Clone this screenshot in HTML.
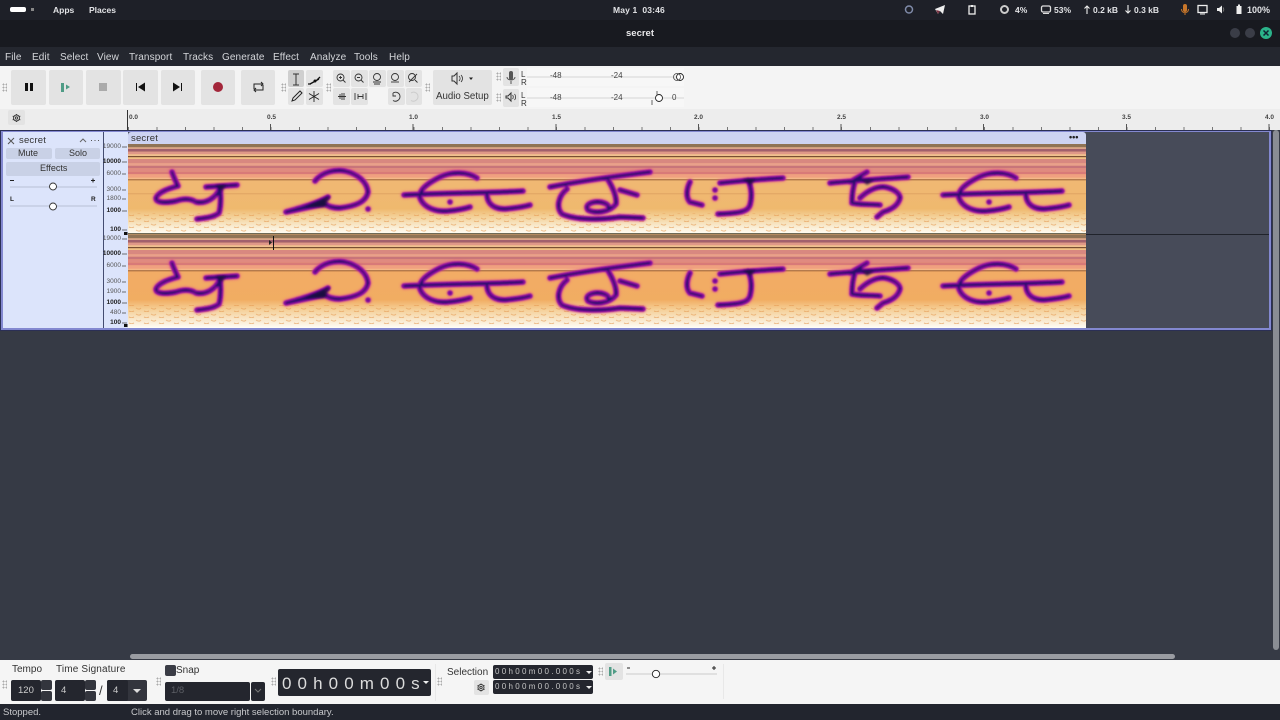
<!DOCTYPE html>
<html><head><meta charset="utf-8"><style>
*{box-sizing:border-box;margin:0;padding:0}
html,body{width:1280px;height:720px;overflow:hidden;background:#363a45;font-family:"Liberation Sans",sans-serif}
.a{position:absolute}
.t{position:absolute;white-space:nowrap;line-height:1}
.m{top:53px;font-size:10px;color:#d4d6da;letter-spacing:.1px}
.b{position:absolute;background:#e3e3e3;border-radius:2px}
.tt{top:5px;font-size:8.5px;color:#e2e3e6;font-weight:bold}
.g{position:absolute;width:5px;background-image:radial-gradient(circle,#aaa 0.8px,transparent 1px);background-size:3px 3px}
.r{position:absolute;font-size:6.5px;color:#555;right:1159px;line-height:1;white-space:nowrap}
.rb{font-weight:bold;color:#222}
.rl{position:absolute;top:115px;font-size:6.5px;font-weight:bold;color:#444;line-height:1}
.d{position:absolute;background:#24262e;border-radius:2px}
svg{position:absolute;overflow:visible}
</style></head><body>

<div class="a" style="left:0;top:0;width:1280px;height:20px;background:#1e2028"></div>
<div class="a" style="left:0;top:20px;width:1280px;height:27px;background:#181a20"></div>
<div class="a" style="left:0;top:47px;width:1280px;height:19px;background:#24272f"></div>
<div class="a" style="left:0;top:66px;width:1280px;height:43px;background:#f4f4f4"></div>
<div class="a" style="left:0;top:109px;width:1280px;height:21px;background:#ededed"></div>

<div class="a" style="left:10px;top:7px;width:16px;height:5px;background:#fff;border-radius:2px"></div>
<div class="a" style="left:31px;top:8px;width:3px;height:3px;background:#888"></div>
<div class="t tt" style="left:53px;top:6px">Apps</div>
<div class="t tt" style="left:89px;top:6px">Places</div>
<div class="t tt" style="left:613px;top:6px;letter-spacing:.15px">May 1&nbsp; 03:46</div>
<div class="t" style="left:626px;top:29px;font-size:9.500px;font-weight:bold;color:#e8e8ea">secret</div>

<svg style="left:0;top:0" width="1280" height="47" viewBox="0 0 1280 47">
<circle cx="909" cy="9.500" r="3.500" fill="none" stroke="#7f8aa8" stroke-width="1.500"/>
<path d="M935 9L945 5L943 14L940 11L938 14Z" fill="#eee"/><path d="M936 10L940 11L938 14Z" fill="#7a3040"/>
<rect x="969" y="6" width="6" height="8" fill="none" stroke="#eee" stroke-width="1.300"/><rect x="971" y="5" width="2" height="2" fill="#eee"/>
<circle cx="1004.500" cy="9.500" r="3.500" fill="none" stroke="#ccc" stroke-width="2"/>
<rect x="1041.500" y="6" width="9" height="6" rx="1.500" fill="none" stroke="#ddd" stroke-width="1.300"/><path d="M1043 13.500h6" stroke="#ddd"/>
<path d="M1087 14V6M1084.500 8.500L1087 6L1089.500 8.500" fill="none" stroke="#eee" stroke-width="1.100"/>
<path d="M1128 5V13M1125.500 10.500L1128 13L1130.500 10.500" fill="none" stroke="#eee" stroke-width="1.100"/>
<rect x="1183" y="4" width="4" height="8" rx="2" fill="#c8762a"/><path d="M1181.500 9c0 5 7 5 7 0M1185 13v2" stroke="#c8762a" fill="none"/>
<rect x="1198" y="5.500" width="9" height="7" fill="none" stroke="#eee" stroke-width="1.300"/><path d="M1200 14h5" stroke="#eee"/>
<path d="M1217 8h2l3-2.500v8l-3-2.500h-2z" fill="#eee"/><path d="M1223 7.500c1 1 1 3 0 4" stroke="#777" fill="none"/>
<rect x="1236.500" y="6" width="5" height="8" fill="#eee"/><rect x="1238" y="4.500" width="2" height="2" fill="#eee"/>
<circle cx="1235" cy="33" r="5" fill="#3a3d47"/><circle cx="1250" cy="33" r="5" fill="#3a3d47"/><circle cx="1266" cy="33" r="6" fill="#2bb38a"/>
<path d="M1263.500 30.500l5 5M1268.500 30.500l-5 5" stroke="#123" stroke-width="1.500"/>
</svg>
<div class="t tt" style="left:1015px;top:6px">4%</div>
<div class="t tt" style="left:1054px;top:6px">53%</div>
<div class="t tt" style="left:1093px;top:6px">0.2 kB</div>
<div class="t tt" style="left:1134px;top:6px">0.3 kB</div>
<div class="t tt" style="left:1247px;top:6px;font-size:9px">100%</div>

<div class="t m" style="left:5px">File</div>
<div class="t m" style="left:32px">Edit</div>
<div class="t m" style="left:60px">Select</div>
<div class="t m" style="left:97px">View</div>
<div class="t m" style="left:129px">Transport</div>
<div class="t m" style="left:183px">Tracks</div>
<div class="t m" style="left:222px">Generate</div>
<div class="t m" style="left:273px">Effect</div>
<div class="t m" style="left:310px">Analyze</div>
<div class="t m" style="left:354px">Tools</div>
<div class="t m" style="left:389px">Help</div>

<div class="b" style="left:11px;top:70px;width:35px;height:35px"></div>
<div class="b" style="left:49px;top:70px;width:34px;height:35px"></div>
<div class="b" style="left:86px;top:70px;width:35px;height:35px"></div>
<div class="b" style="left:123px;top:70px;width:35px;height:35px"></div>
<div class="b" style="left:161px;top:70px;width:34px;height:35px"></div>
<div class="b" style="left:201px;top:70px;width:34px;height:35px"></div>
<div class="b" style="left:241px;top:70px;width:34px;height:35px"></div>
<div class="b" style="left:288px;top:70px;width:16px;height:17px;background:#cfcfcf"></div>
<div class="b" style="left:306px;top:70px;width:17px;height:17px"></div>
<div class="b" style="left:288px;top:88px;width:16px;height:17px"></div>
<div class="b" style="left:306px;top:88px;width:17px;height:17px"></div>
<div class="b" style="left:333px;top:70px;width:17px;height:17px"></div>
<div class="b" style="left:351px;top:70px;width:17px;height:17px"></div>
<div class="b" style="left:369px;top:70px;width:17px;height:17px"></div>
<div class="b" style="left:387px;top:70px;width:17px;height:17px"></div>
<div class="b" style="left:405px;top:70px;width:17px;height:17px"></div>
<div class="b" style="left:333px;top:88px;width:17px;height:17px"></div>
<div class="b" style="left:351px;top:88px;width:17px;height:17px"></div>
<div class="b" style="left:388px;top:88px;width:17px;height:17px"></div>
<div class="b" style="left:406px;top:88px;width:16px;height:17px"></div>
<div class="b" style="left:433px;top:70px;width:59px;height:35px"></div>
<div class="b" style="left:503px;top:68px;width:16px;height:18px"></div>
<div class="b" style="left:503px;top:89px;width:16px;height:18px"></div>
<div class="b" style="left:8px;top:110px;width:17px;height:15px"></div>

<div class="g" style="left:2px;top:83px;height:9px"></div>
<div class="g" style="left:281px;top:83px;height:9px"></div>
<div class="g" style="left:326px;top:83px;height:9px"></div>
<div class="g" style="left:425px;top:83px;height:9px"></div>
<div class="g" style="left:496px;top:72px;height:9px"></div>
<div class="g" style="left:496px;top:93px;height:9px"></div>

<svg style="left:0;top:60px" width="700" height="60" viewBox="0 60 700 60">
<rect x="25" y="83" width="3" height="8" fill="#111"/><rect x="30" y="83" width="3" height="8" fill="#111"/>
<rect x="61" y="83" width="3" height="9" fill="#4f9c86"/><path d="M66 84.500l4 2.500-4 2.500z" fill="#4f9c86"/>
<rect x="99" y="83" width="8" height="8" fill="#aaa"/>
<rect x="136" y="83" width="1" height="8" fill="#111"/><path d="M145 82.500v9l-7-4.500z" fill="#111"/>
<path d="M173 82.500v9l7-4.500z" fill="#111"/><rect x="181" y="83" width="1" height="8" fill="#111"/>
<circle cx="218" cy="87" r="5" fill="#a3263a"/>
<path d="M254 89v-5h8M261 82l2 2-2 2M263 85v5h-8M256 92l-2-2 2-2" fill="none" stroke="#222" stroke-width="1"/>
<path d="M293 74h6M293 85h6M296 74v11" stroke="#333" fill="none"/>
<path d="M310 84l9-5M308 84h3M317 80l3-3" stroke="#111" stroke-width="1.300" fill="none"/><circle cx="315" cy="81" r="1.500" fill="#111"/>
<path d="M292 101l1-3 7-7 2 2-7 7z" fill="none" stroke="#222"/>
<path d="M314 91v11M309 93.500l10 6M319 93.500l-10 6" stroke="#222" stroke-width=".9"/>
<g fill="none" stroke="#333" stroke-width=".9">
<circle cx="340.500" cy="77.500" r="3.500"/><path d="M343 80l2.500 2.500M339 77.500h3M340.500 76v3"/>
<circle cx="358.500" cy="77.500" r="3.500"/><path d="M361 80l2.500 2.500M357 77.500h3"/>
<circle cx="377" cy="77" r="3.500"/><path d="M373 82h8M374 84h6"/>
<circle cx="395" cy="77" r="3.500"/><path d="M391 82h8"/>
<circle cx="412" cy="77" r="3.500"/><path d="M415 80l2.500 2.500M409 82l8-8"/>
<path d="M338 96.500h8M340 94v5M344 93v7M342 93v7"/>
<path d="M355 93v7M366 93v7M358 96.500h5M358 94v5M363 94v5"/>
<path d="M393 93c3-2 7 0 7 3.500s-4 6-7 4M393 93v3h3"/>
</g>
<path d="M411 93c3-2 7 0 7 3.500s-4 6-7 4" fill="none" stroke="#ccc"/>
<path d="M452 76h2l3-3v11l-3-3h-2z" fill="none" stroke="#333"/><path d="M459 76c1.500 1.500 1.500 3.500 0 5M461 75c2 2 2 5 0 7" fill="none" stroke="#333" stroke-width=".8"/>
<path d="M469 77.500h4l-2 2.500z" fill="#222"/>
<rect x="509" y="71" width="4" height="9" rx="2" fill="#555"/><path d="M507 77c0 4 8 4 8 0M511 81v3" fill="none" stroke="#555"/>
<path d="M506 96h2l3-3v8l-3-3h-2z" fill="none" stroke="#333"/><path d="M512.500 95c1 1 1 3 0 4M514.500 94c1.500 1.500 1.500 4.500 0 6" fill="none" stroke="#333" stroke-width=".8"/>
<rect x="527" y="68" width="157" height="18" fill="#f7f7f7"/><rect x="527" y="88" width="157" height="19" fill="#f7f7f7"/>
<path d="M527 77H684M527 98H684" stroke="#d5d5d5"/>
<circle cx="680" cy="77" r="3.500" fill="#fff" stroke="#222" stroke-width=".9"/><circle cx="677" cy="77" r="3.500" fill="none" stroke="#444" stroke-width=".8"/>
<circle cx="659" cy="98" r="3.500" fill="#fff" stroke="#222" stroke-width=".9"/><path d="M652 100v5M657 91v4" stroke="#666"/>
<g fill="none" stroke="#333" stroke-width=".9"><circle cx="16.500" cy="118" r="3"/><circle cx="16.500" cy="118" r="1.200"/><path d="M16.500 114v1M16.500 121v1M12.700 116l1 .6M19.300 119.400l1 .6M12.700 120l1-.6M19.300 116.600l1-.6"/></g>
</svg>

<div class="t" style="left:436px;top:91.500px;font-size:9.700px;color:#333">Audio Setup</div>
<div class="t" style="left:521px;top:71px;font-size:8px;color:#333;line-height:8px;white-space:normal;width:8px">L<br>R</div>
<div class="t" style="left:521px;top:92px;font-size:8px;color:#333;line-height:8px;white-space:normal;width:8px">L<br>R</div>
<div class="t" style="left:550px;top:72px;font-size:8px;color:#444">-48</div>
<div class="t" style="left:611px;top:72px;font-size:8px;color:#444">-24</div>
<div class="t" style="left:550px;top:94px;font-size:8px;color:#444">-48</div>
<div class="t" style="left:611px;top:94px;font-size:8px;color:#444">-24</div>
<div class="t" style="left:672px;top:94px;font-size:8px;color:#444">0</div>

<div class="rl" style="left:129px">0.0</div><div class="rl" style="left:267px">0.5</div><div class="rl" style="left:409px">1.0</div><div class="rl" style="left:552px">1.5</div><div class="rl" style="left:694px">2.0</div><div class="rl" style="left:837px">2.5</div><div class="rl" style="left:980px">3.0</div><div class="rl" style="left:1122px">3.5</div><div class="rl" style="left:1265px">4.0</div>
<div class="a" style="left:127px;top:110px;width:1px;height:20px;background:#333"></div>
<div class="a" style="left:128px;top:127px;width:1143px;height:3px;background:repeating-linear-gradient(90deg,#777 0,#777 1px,transparent 1px,transparent 28.53px)"></div>
<div class="a" style="left:270px;top:124px;width:1000px;height:6px;background:repeating-linear-gradient(90deg,#555 0,#555 1px,transparent 1px,transparent 142.65px)"></div>

<div class="a" style="left:0;top:130px;width:1272px;height:201px;background:#474b59;border:3px solid #8388d0;border-top-width:2px;outline:1px solid #2b2f55;outline-offset:-1px"></div>
<div class="a" style="left:3px;top:132px;width:100px;height:196px;background:#dce4fb"></div>
<div class="a" style="left:103px;top:132px;width:1px;height:196px;background:#444c70"></div>
<div class="a" style="left:104px;top:132px;width:24px;height:196px;background:#dce4fb"></div>
<div class="a" style="left:128px;top:132px;width:958px;height:12px;background:#cdd3f2;border-radius:3px 3px 0 0"></div>
<div class="a" style="left:1086px;top:234px;width:183px;height:1px;background:#20232b"></div>
<div class="a" style="left:1273px;top:130px;width:6px;height:520px;background:#8a8d94;border-radius:3px"></div>

<div class="t" style="left:131px;top:134px;font-size:9.500px;color:#333;letter-spacing:.2px">secret</div>
<div class="t" style="left:1069px;top:133px;font-size:9px;font-weight:bold;color:#222">•••</div>
<div class="t" style="left:19px;top:136px;font-size:9.500px;color:#333;letter-spacing:.2px">secret</div>
<div class="b" style="left:6px;top:148px;width:46px;height:11px;background:#c9d1e6"></div>
<div class="b" style="left:55px;top:148px;width:45px;height:11px;background:#c9d1e6"></div>
<div class="b" style="left:6px;top:162px;width:94px;height:14px;background:#c9d1e6"></div>
<div class="t" style="left:18px;top:149px;font-size:9px;color:#333">Mute</div>
<div class="t" style="left:69px;top:149px;font-size:9px;color:#333">Solo</div>
<div class="t" style="left:40px;top:164px;font-size:9px;color:#333">Effects</div>
<div class="t" style="left:10px;top:197px;font-size:6.500px;font-weight:bold;color:#222">L</div>
<div class="t" style="left:91px;top:197px;font-size:6.500px;font-weight:bold;color:#222">R</div>

<svg style="left:0;top:130px" width="128" height="200" viewBox="0 130 128 200">
<path d="M8 138l6 6M14 138l-6 6" stroke="#555" fill="none"/>
<path d="M80 142l3-3 3 3" stroke="#666" fill="none"/><path d="M91 140.500h1M94.500 140.500h1M98 140.500h1" stroke="#555"/>
<path d="M10 180.500h4M91 180.500h4M93 178.500v4" stroke="#222"/>
<path d="M10 187H97M10 206H97" stroke="#b9c0d6"/>
<circle cx="53" cy="186.500" r="3.500" fill="#fff" stroke="#333" stroke-width=".9"/><circle cx="53" cy="206.500" r="3.500" fill="#fff" stroke="#333" stroke-width=".9"/>
<rect x="124" y="232" width="3.500" height="3" fill="#111"/><rect x="124" y="324" width="3.500" height="3" fill="#111"/>
<path d="M122 147h5M122 162h5M122 174h4M122 190h4M122 199h4M122 211h5M122 230h5M122 239h5M122 254h5M122 266h4M122 282h4M122 292h4M122 303h5M122 313h4M122 323h5" stroke="#444" stroke-width=".8"/>
</svg>
<div class="r" style="top:144px">19000</div><div class="r rb" style="top:159px">10000</div><div class="r" style="top:171px">6000</div><div class="r" style="top:187px">3000</div><div class="r" style="top:196px">1800</div><div class="r rb" style="top:208px">1000</div><div class="r rb" style="top:227px">100</div>
<div class="r" style="top:236px">19000</div><div class="r rb" style="top:251px">10000</div><div class="r" style="top:263px">6000</div><div class="r" style="top:279px">3000</div><div class="r" style="top:289px">1900</div><div class="r rb" style="top:300px">1000</div><div class="r" style="top:310px">480</div><div class="r rb" style="top:320px">100</div>

<svg style="left:128px;top:144px;overflow:hidden" width="958" height="184" viewBox="128 144 958 184">
<defs>
<linearGradient id="o1" x1="0" y1="0" x2="0" y2="1"><stop offset="0" stop-color="#f2b67a"/><stop offset=".72" stop-color="#efb96e"/><stop offset=".82" stop-color="#f4d49e"/><stop offset=".92" stop-color="#f9edd3"/><stop offset="1" stop-color="#fffdf5"/></linearGradient>
<linearGradient id="o2" x1="0" y1="0" x2="0" y2="1"><stop offset="0" stop-color="#f4a96a"/><stop offset=".7" stop-color="#f1ad62"/><stop offset=".8" stop-color="#f5cf96"/><stop offset=".92" stop-color="#f9ead0"/><stop offset="1" stop-color="#fffdf5"/></linearGradient>
<pattern id="sp" width="15" height="6" patternUnits="userSpaceOnUse"><path d="M1 2c2 1.500 4 1.500 5 0M9 5c2 1 3 1 5 0" stroke="#e59a52" stroke-width="1" fill="none" opacity=".6"/></pattern>
<filter id="sf" x="0" y="-5%" width="100%" height="110%"><feGaussianBlur stdDeviation="0 .35"/></filter>
<filter id="gl" x="-5%" y="-30%" width="110%" height="160%">
<feGaussianBlur in="SourceAlpha" stdDeviation="1.600" result="b1"/><feFlood flood-color="#e2478a"/><feComposite in2="b1" operator="in" result="halo"/>
<feGaussianBlur in="SourceGraphic" stdDeviation=".9" result="body"/>
<feMorphology in="SourceAlpha" operator="erode" radius="1.700"/><feGaussianBlur stdDeviation=".7" result="c1"/><feFlood flood-color="#2a0c6e"/><feComposite in2="c1" operator="in" result="core"/>
<feMerge><feMergeNode in="halo"/><feMergeNode in="body"/><feMergeNode in="core"/></feMerge>
</filter>
<filter id="bl" x="-10%" y="-30%" width="120%" height="160%"><feGaussianBlur stdDeviation="1.300"/></filter>
</defs>

<rect x="128" y="144" width="958" height="90" fill="url(#o1)"/>
<rect x="128" y="213" width="958" height="19" fill="url(#sp)"/>
<g filter="url(#sf)">
<rect x="128" y="144" width="958" height="3.300" fill="#8f7355"/><rect x="128" y="147.300" width="958" height="2" fill="#d9a58a"/><rect x="128" y="149" width="958" height="2.700" fill="#a2616c"/><rect x="128" y="151.700" width="958" height="2.600" fill="#e09888"/><rect x="128" y="154.300" width="958" height="1.700" fill="#f0c090"/><rect x="128" y="156" width="958" height="1.300" fill="#7a5030"/><rect x="128" y="157.300" width="958" height="1.700" fill="#f2c285"/><rect x="128" y="159" width="958" height="4.300" fill="#d88880"/><rect x="128" y="163.300" width="958" height="2.400" fill="#e9a08c"/><rect x="128" y="165.700" width="958" height="2.600" fill="#c8747a"/><rect x="128" y="168.300" width="958" height="3.400" fill="#e08a80"/><rect x="128" y="171.700" width="958" height="2.600" fill="#d87a78"/><rect x="128" y="174.300" width="958" height="3.400" fill="#f0a080"/><rect x="128" y="177.700" width="958" height="1.600" fill="#f4b888"/><rect x="128" y="179.300" width="958" height="1" fill="#9a6238"/>
<rect x="128" y="193.500" width="958" height=".7" fill="#d99a5c"/>
</g>
<path filter="url(#gl)" fill="none" stroke="#8a16a0" stroke-width="5.500" stroke-linecap="round" stroke-linejoin="round" d="M172 172C174 178 176 182 178 186C170 188 158 192 156 198C156 203 166 203 176 201C182 199 190 198 196 202C206 204 216 198 220 188M206 187L237 185M220 187C221 198 221 206 219 213C214 217 206 218 197 219M315 181C322 172 335 169 345 171C358 174 367 182 368 192C366 202 356 206 340 208C332 208 327 206 324 203M328 197C318 203 300 208 286 212L324 204M368 209h.1M477 178C468 172 452 171 440 177C428 183 418 190 420 198C424 208 436 212 448 211C458 210 464 209 470 207M404 195C440 193 490 193 523 191M450 202h.1M487 196C488 204 494 209 505 209C515 208 523 207 530 205M550 187C570 183 600 178 650 172M567 189C558 196 556 208 562 214C575 220 600 220 620 217L643 218M620 190L637 195M607 178C612 186 617 196 616 204C610 212 596 214 588 210C584 205 592 201 600 202C606 203 610 205 608 210M690 182C686 190 686 198 690 202L702 205M715 190h.1M715 198h.1M720 183C740 181 765 179 783 178M748 180C752 188 752 198 750 205C748 211 743 213 718 214M830 183C850 181 880 179 908 177M867 172L850 182M855 182C852 190 852 198 852 203C862 205 872 204 880 205M860 198C868 190 878 186 885 187C895 189 900 194 900 198C898 206 890 210 883 212L877 217M1016 178C1007 172 991 171 979 177C967 183 957 190 959 198C963 208 975 212 987 211C997 210 1003 209 1009 207M943 195C979 193 1029 193 1062 191M989 202h.1M1026 196C1027 204 1033 209 1044 209C1054 208 1062 207 1069 205"/>
<path filter="url(#bl)" opacity=".85" fill="#120838" d="M305 207L330 196L325 207ZM216 185L226 185L222 191ZM743 179L755 179L751 185ZM862 180L874 180L867 185Z"/>

<rect x="128" y="234" width="958" height="94" fill="url(#o2)"/>
<rect x="128" y="305" width="958" height="20" fill="url(#sp)"/>
<g transform="translate(0 91)">
<g filter="url(#sf)">
<rect x="128" y="144" width="958" height="3.300" fill="#8f7355"/><rect x="128" y="147.300" width="958" height="2" fill="#d9a58a"/><rect x="128" y="149" width="958" height="2.700" fill="#a2616c"/><rect x="128" y="151.700" width="958" height="2.600" fill="#e09888"/><rect x="128" y="154.300" width="958" height="1.700" fill="#f0c090"/><rect x="128" y="156" width="958" height="1.300" fill="#7a5030"/><rect x="128" y="157.300" width="958" height="1.700" fill="#f2c285"/><rect x="128" y="159" width="958" height="4.300" fill="#d88880"/><rect x="128" y="163.300" width="958" height="2.400" fill="#e9a08c"/><rect x="128" y="165.700" width="958" height="2.600" fill="#c8747a"/><rect x="128" y="168.300" width="958" height="3.400" fill="#e08a80"/><rect x="128" y="171.700" width="958" height="2.600" fill="#d87a78"/><rect x="128" y="174.300" width="958" height="3.400" fill="#f0a080"/><rect x="128" y="177.700" width="958" height="1.600" fill="#f4b888"/><rect x="128" y="179.300" width="958" height="1" fill="#9a6238"/>
</g>
<path filter="url(#gl)" fill="none" stroke="#8a16a0" stroke-width="5.500" stroke-linecap="round" stroke-linejoin="round" d="M172 172C174 178 176 182 178 186C170 188 158 192 156 198C156 203 166 203 176 201C182 199 190 198 196 202C206 204 216 198 220 188M206 187L237 185M220 187C221 198 221 206 219 213C214 217 206 218 197 219M315 181C322 172 335 169 345 171C358 174 367 182 368 192C366 202 356 206 340 208C332 208 327 206 324 203M328 197C318 203 300 208 286 212L324 204M368 209h.1M477 178C468 172 452 171 440 177C428 183 418 190 420 198C424 208 436 212 448 211C458 210 464 209 470 207M404 195C440 193 490 193 523 191M450 202h.1M487 196C488 204 494 209 505 209C515 208 523 207 530 205M550 187C570 183 600 178 650 172M567 189C558 196 556 208 562 214C575 220 600 220 620 217L643 218M620 190L637 195M607 178C612 186 617 196 616 204C610 212 596 214 588 210C584 205 592 201 600 202C606 203 610 205 608 210M690 182C686 190 686 198 690 202L702 205M715 190h.1M715 198h.1M720 183C740 181 765 179 783 178M748 180C752 188 752 198 750 205C748 211 743 213 718 214M830 183C850 181 880 179 908 177M867 172L850 182M855 182C852 190 852 198 852 203C862 205 872 204 880 205M860 198C868 190 878 186 885 187C895 189 900 194 900 198C898 206 890 210 883 212L877 217M1016 178C1007 172 991 171 979 177C967 183 957 190 959 198C963 208 975 212 987 211C997 210 1003 209 1009 207M943 195C979 193 1029 193 1062 191M989 202h.1M1026 196C1027 204 1033 209 1044 209C1054 208 1062 207 1069 205"/>
<path filter="url(#bl)" opacity=".85" fill="#120838" d="M305 207L330 196L325 207ZM216 185L226 185L222 191ZM743 179L755 179L751 185ZM862 180L874 180L867 185Z"/>
</g>
<rect x="128" y="233" width="958" height="1.500" fill="#6f6a55"/>
<rect x="273" y="236" width="1" height="14" fill="#111"/><path d="M269 240l3 2.500-3 2.500z" fill="#222"/>
</svg>

<div class="a" style="left:130px;top:654px;width:1045px;height:5px;background:#9a9ca2;border-radius:3px"></div>
<div class="a" style="left:0;top:660px;width:1280px;height:44px;background:#f5f5f5"></div>
<div class="a" style="left:0;top:704px;width:1280px;height:16px;background:#22252e"></div>

<div class="g" style="left:2px;top:680px;height:9px"></div>
<div class="g" style="left:156px;top:677px;height:9px"></div>
<div class="g" style="left:271px;top:677px;height:9px"></div>
<div class="g" style="left:437px;top:677px;height:9px"></div>
<div class="g" style="left:598px;top:667px;height:9px"></div>

<div class="t" style="left:12px;top:665px;font-size:10px;color:#333">Tempo</div>
<div class="t" style="left:56px;top:665px;font-size:10px;color:#333;letter-spacing:.15px">Time Signature</div>
<div class="d" style="left:11px;top:680px;width:30px;height:21px"></div><div class="d" style="left:41px;top:680px;width:11px;height:10px;background:#33353d"></div><div class="d" style="left:41px;top:691px;width:11px;height:10px;background:#33353d"></div>
<div class="d" style="left:55px;top:680px;width:30px;height:21px"></div><div class="d" style="left:85px;top:680px;width:11px;height:10px;background:#33353d"></div><div class="d" style="left:85px;top:691px;width:11px;height:10px;background:#33353d"></div>
<div class="d" style="left:107px;top:680px;width:40px;height:21px;background:#33353d"></div>
<div class="d" style="left:107px;top:680px;width:21px;height:21px"></div>
<div class="t" style="left:18px;top:686px;font-size:9.500px;color:#ccc">120</div>
<div class="t" style="left:61px;top:686px;font-size:9.500px;color:#ccc">4</div>
<div class="t" style="left:99px;top:684px;font-size:13px;color:#333">/</div>
<div class="t" style="left:113px;top:686px;font-size:9.500px;color:#ccc">4</div>
<div class="a" style="left:133px;top:689px;width:0;height:0;border:4px solid transparent;border-top:4px solid #ddd"></div>
<div class="d" style="left:165px;top:665px;width:11px;height:11px;background:#3a3c45"></div>
<div class="t" style="left:176px;top:666px;font-size:10px;color:#333">Snap</div>
<div class="d" style="left:165px;top:682px;width:85px;height:19px"></div><div class="d" style="left:251px;top:682px;width:14px;height:19px"></div>
<div class="t" style="left:171px;top:686px;font-size:9.500px;color:#5d5f66">1/8</div>
<svg style="left:254px;top:688px" width="9" height="6"><path d="M1 1l3 3 3-3" fill="none" stroke="#777"/></svg>
<div class="d" style="left:278px;top:669px;width:153px;height:27px"></div>
<div class="t" style="left:282px;top:675px;font-size:17px;color:#dcdcdc;letter-spacing:6.100px">00h00m00s</div>
<div class="a" style="left:423px;top:681px;width:0;height:0;border:3.500px solid transparent;border-top:3.500px solid #eee"></div>
<div class="a" style="left:435px;top:664px;width:1px;height:37px;background:#e8e8e8"></div>
<div class="t" style="left:447px;top:668px;font-size:10px;color:#333">Selection</div>
<div class="b" style="left:474px;top:680px;width:15px;height:15px"></div>
<svg style="left:474px;top:680px" width="15" height="15" fill="none" stroke="#333" stroke-width=".9"><circle cx="7" cy="7.500" r="3"/><circle cx="7" cy="7.500" r="1.200"/><path d="M7 3.500v1M7 10.500v1M3.500 5.500l1 .6M9.500 9l1 .6M3.500 9.500l1-.6M9.500 6l1-.6"/></svg>
<div class="d" style="left:493px;top:665px;width:100px;height:14px"></div>
<div class="d" style="left:493px;top:680px;width:100px;height:14px"></div>
<div class="t" style="left:495px;top:668px;font-size:8px;color:#c4c4c4;letter-spacing:2.300px">00h00m00.000s</div>
<div class="t" style="left:495px;top:683px;font-size:8px;color:#c4c4c4;letter-spacing:2.300px">00h00m00.000s</div>
<div class="a" style="left:586px;top:671px;width:0;height:0;border:3px solid transparent;border-top:3px solid #eee"></div>
<div class="a" style="left:586px;top:686px;width:0;height:0;border:3px solid transparent;border-top:3px solid #eee"></div>
<div class="b" style="left:605px;top:663px;width:18px;height:17px"></div>
<svg style="left:605px;top:663px" width="130" height="20"><rect x="4" y="4" width="2.500" height="9" fill="#4f9c86"/><path d="M8 5.500l4 3-4 3z" fill="#4f9c86"/><path d="M21 11H112" stroke="#ccc"/><path d="M22 5h3M107 5h4M109 3v4" stroke="#222"/><circle cx="51" cy="11" r="3.700" fill="#fff" stroke="#222" stroke-width=".9"/></svg>
<div class="a" style="left:723px;top:664px;width:1px;height:35px;background:#e8e8e8"></div>

<div class="t" style="left:3px;top:708px;font-size:9.500px;color:#c8c9cc">Stopped.</div>
<div class="t" style="left:131px;top:708px;font-size:9.500px;color:#c8c9cc">Click and drag to move right selection boundary.</div>
</body></html>
